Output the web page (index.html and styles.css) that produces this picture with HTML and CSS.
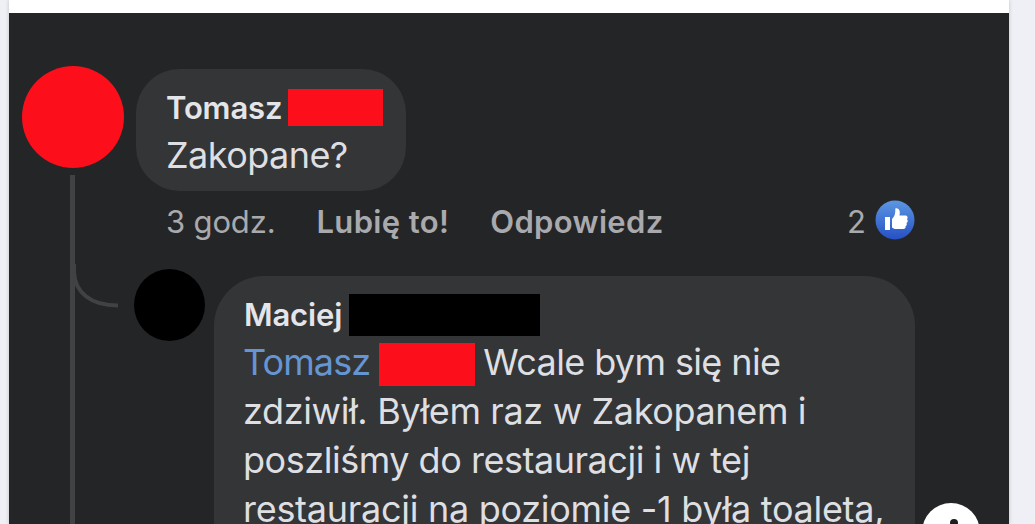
FILE: index.html
```
<!DOCTYPE html>
<html lang="pl">
  <head>
    <meta charset="UTF-8" />
    <meta name="viewport" content="width=device-width, initial-scale=1.0" />
    <title>Komentarze</title>
    <link rel="stylesheet" href="styles.css">
  </head>
  <body>
    <div class="post">
      <div class="thread">
        <div class="rail">
          <div class="avatar"></div>
          <div class="line"></div>
          <svg class="branch" width="48" height="46" viewBox="0 0 48 46">
            <path d="M2 0V8C3 28 18 41.500 46 41.500" fill="none" stroke="#414244" stroke-width="4" />
          </svg>
        </div>
        <div class="comments">
          <div class="bubble">
            <div class="author">Tomasz<span class="redacted"></span></div>
            <div class="text">Zakopane?</div>
          </div>
          <div class="actions">
            <span class="time">3 godz.</span>
            <span class="like">Lubię to!</span>
            <span class="answer">Odpowiedz</span>
            <span class="count">2</span>
            <svg class="thumb" width="40" height="40" viewBox="0 0 40 40">
              <defs>
                <linearGradient id="blue" x1="0" y1="0" x2="0" y2="1">
                  <stop offset="0" stop-color="#5c97e2" />
                  <stop offset="1" stop-color="#2650c4" />
                </linearGradient>
              </defs>
              <circle cx="20" cy="20" r="19.500" fill="url(#blue)" />
              <path d="M10 17H15V30H10ZM17 19C19.500 16.500 20.500 14 20.300 8.500C23.500 7.500 25.800 10.500 24.500 15.500H30.500C32.500 15.500 33.200 18 32 19.200C33.200 20.200 33 22.200 31.500 23C32.200 24.300 31.700 25.800 30.500 26.200C31 28 30 29 28 29H21C19 29 18 28.300 17 27.500Z" fill="#fff" />
            </svg>
          </div>
          <div class="reply">
            <div class="avatar small"></div>
            <div class="bubble large">
              <div class="author">Maciej<span class="redacted black"></span></div>
              <div class="text">
                <div class="row first"><a class="mention">Tomasz</a><span class="redacted tall"></span><span>Wcale bym się nie</span></div>
                <div class="row second">zdziwił. Byłem raz w Zakopanem i</div>
                <div class="row third">poszliśmy do restauracji i w tej</div>
                <div class="row fourth">restauracji na poziomie -1 była toaleta,</div>
              </div>
            </div>
          </div>
        </div>
      </div>
    </div>
    <div class="roundButton"><span class="dot"></span></div>
  </body>
</html>
```

FILE: styles.css
```
body {
  background-color: #eff0f5;
  font-family: Inter, 'Liberation Sans', sans-serif;
  margin: 0;
  height: 524px;
  overflow: hidden;
}

.post {
  background-color: #fff;
  box-shadow: 0 0 4px rgba(0, 0, 0, 0.2);
  box-sizing: border-box;
  height: 524px;
  margin-left: 9px;
  padding-top: 13px;
  width: 1000px;
}

.thread {
  background-color: #242527;
  box-sizing: border-box;
  display: flex;
  gap: 10px;
  height: 511px;
  overflow: hidden;
  padding: 53px 94px 0 12px;
}

.rail {
  align-items: center;
  display: flex;
  flex-direction: column;
  gap: 7px;
  position: relative;
  width: 103px;
}

.avatar {
  background-color: #fc0f1b;
  border-radius: 50%;
  flex: none;
  height: 102px;
  width: 102px;
}

.avatar.small {
  background-color: #000;
  height: 72px;
  margin-top: -7px;
  width: 71px;
}

.line {
  background-color: #414244;
  flex: 1;
  width: 5px;
}

/* curve that leads to the reply */
.branch {
  left: 51px;
  position: absolute;
  top: 198px;
}

.comments {
  flex: 1;
}

.bubble {
  background-color: #343537;
  border-radius: 44px;
  box-sizing: border-box;
  height: 122px;
  margin: 3px 0 0 2px;
  padding: 14px 0 0 30px;
  width: 270px;
}

.author {
  align-items: center;
  color: #e4e5e8;
  display: flex;
  font-size: 31px;
  font-weight: 600;
  height: 48px;
  letter-spacing: -0.15px;
}

.text {
  color: #dedfe2;
  font-size: 36px;
  letter-spacing: -0.55px;
  line-height: 49px;
}

.redacted {
  background-color: #fc0f1b;
  height: 37px;
  margin-left: 6px;
  width: 95px;
}

.redacted.black {
  background-color: #000;
  height: 42px;
  margin: 2px 0 0 7px;
  width: 191px;
}

.redacted.tall {
  height: 43px;
  margin: 3px 8px 0 9px;
  width: 96px;
}

.actions {
  align-items: center;
  color: #a9aaad;
  display: flex;
  font-size: 31px;
  height: 60px;
  padding-left: 32px;
}

.time {
  letter-spacing: -0.15px;
}

.like,
.answer {
  font-weight: 600;
  letter-spacing: 0.35px;
  margin-left: 41px;
}

.count {
  margin-left: auto;
}

.thumb {
  margin: -3px 0 0 9px;
}

.reply {
  align-items: flex-start;
  display: flex;
  gap: 9px;
  margin-top: 25px;
}

.bubble.large {
  border-radius: 50px;
  flex: none;
  height: 320px;
  margin: 0;
  width: 701px;
}

.row {
  margin-left: -1px;
  white-space: nowrap;
}

.row.first {
  align-items: center;
  display: flex;
  height: 49px;
  letter-spacing: -0.62px;
}

.row.second {
  letter-spacing: -0.36px;
}

.row.third {
  letter-spacing: -0.47px;
}

.row.fourth {
  letter-spacing: -0.28px;
}

.mention {
  color: #6695d4;
  letter-spacing: -0.9px;
}

.roundButton {
  background-color: #fff;
  border-radius: 50%;
  display: flex;
  height: 58px;
  justify-content: center;
  left: 922px;
  position: fixed;
  top: 503px;
  width: 58px;
}

.dot {
  background-color: #1c1d1f;
  border-radius: 50%;
  height: 8px;
  margin: 16px 0 0 6px;
  width: 8px;
}
```
